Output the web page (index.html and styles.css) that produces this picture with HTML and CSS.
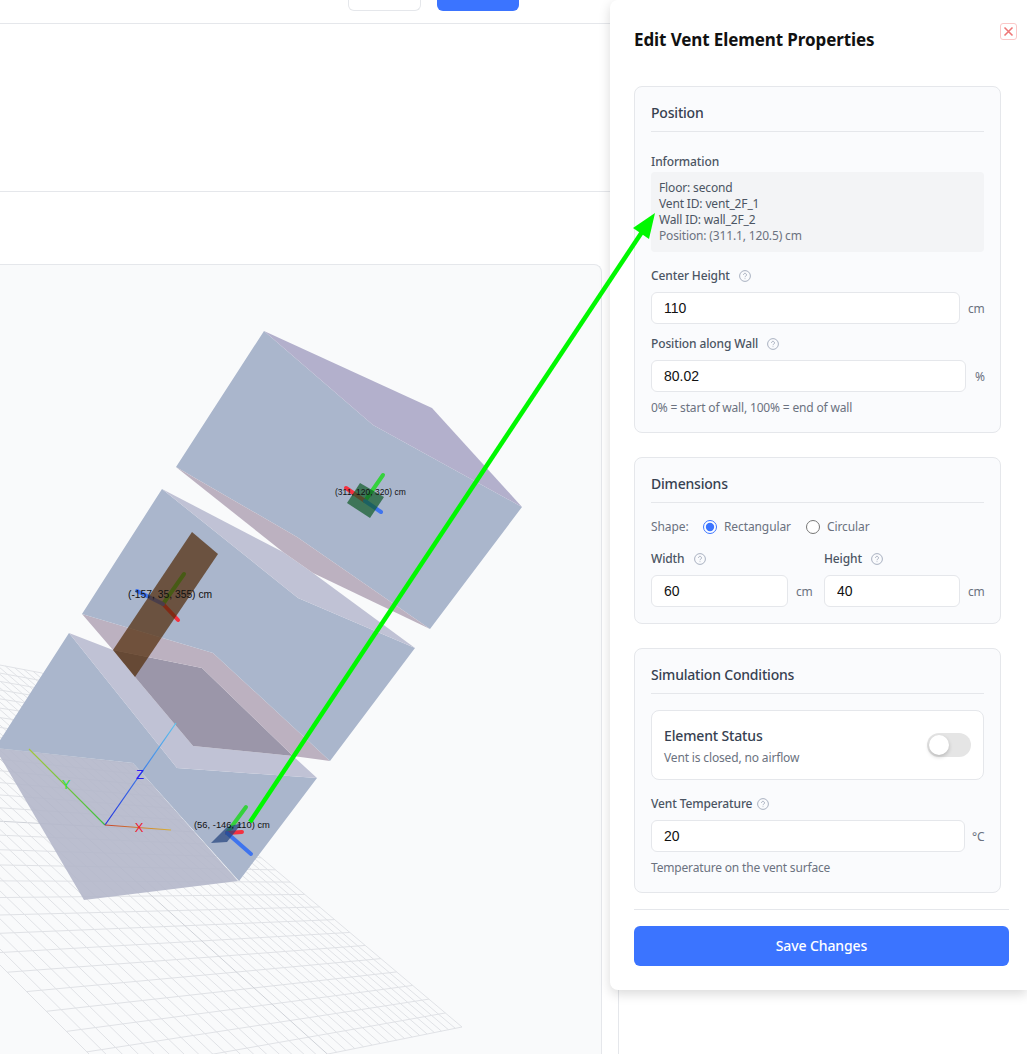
FILE: index.html
```html
<!DOCTYPE html>
<html lang="en">

<head>
    <meta charset="UTF-8">
    <title>Edit Vent Element Properties</title>
    <link rel="stylesheet" href="styles.css">
</head>

<body>
    <div class="topbar">
        <button class="top-btn top-btn-plain"></button>
        <button class="top-btn top-btn-blue"></button>
    </div>
    <div class="subbar"></div>

    <div class="workspace">
        <div class="canvas">
            <svg class="scene" viewBox="0 265 601 789">
                <defs>
                    <linearGradient id="axisZ" gradientUnits="userSpaceOnUse" x1="105" y1="825" x2="176" y2="723">
                        <stop offset="0" stop-color="#1f2fe0" />
                        <stop offset="1" stop-color="#5cc4ee" />
                    </linearGradient>
                    <linearGradient id="axisX" gradientUnits="userSpaceOnUse" x1="105" y1="825" x2="171" y2="830">
                        <stop offset="0" stop-color="#c8442c" />
                        <stop offset="1" stop-color="#d8b030" />
                    </linearGradient>
                    <linearGradient id="axisY" gradientUnits="userSpaceOnUse" x1="105" y1="825" x2="29" y2="749">
                        <stop offset="0" stop-color="#3fc03f" />
                        <stop offset="1" stop-color="#a4c83c" />
                    </linearGradient>
                </defs>

                <g id="grid" class="grid"></g>

                <!-- bottom room -->
                <polygon class="floor" points="-5,748 133,763 238,881 84,900" />
                <polygon class="wall" points="69,633 177,768 317,778 239,881 133,763 -5,748" />
                <polygon class="band" points="69,633 113,650 135,677 193,746 293,756 317,778 177,768" />
                <polygon class="shade" points="113,650 202,668 293,756 193,746 135,677" />
                <polygon class="strip" points="82,614 213,653 330,761 293,756 202,668 113,650" />

                <!-- middle room -->
                <polygon class="wall" points="162,489 298,598 415,648 330,761 213,653 82,614" />
                <polygon class="band" points="162,489 283,552 313,573 415,648 298,598" />

                <!-- top room -->
                <polygon class="wall" points="264,331 373,425 522,507 430,629 297,537 176,467" />
                <polygon class="roof" points="264,331 432,408 522,507 373,425" />
                <polygon class="strip" points="176,467 297,537 430,629 313,573 283,552" />

                <!-- world axes -->
                <line class="world" stroke="url(#axisY)" x1="105" y1="825" x2="29" y2="749" />
                <line class="world" stroke="url(#axisZ)" x1="105" y1="825" x2="176" y2="723" />
                <line class="world" stroke="url(#axisX)" x1="105" y1="825" x2="171" y2="830" />
                <text class="tag tag-y" x="66" y="789">Y</text>
                <text class="tag tag-z" x="140" y="779">Z</text>
                <text class="tag tag-x" x="139" y="832">X</text>

                <!-- vent_2F_1 -->
                <line class="arm arm-green" x1="365" y1="501" x2="383" y2="475" />
                <line class="arm arm-red" x1="365" y1="501" x2="346" y2="488" />
                <line class="arm arm-blue" x1="365" y1="501" x2="381" y2="512" />
                <polygon class="vent vent-green" points="360,483 384,497 370,518 347,503" />
                <text class="coord coord-small" x="335" y="495">(311, 120, 320) cm</text>

                <!-- tall vent -->
                <line class="arm arm-green" x1="163" y1="604" x2="184" y2="574" />
                <line class="arm arm-red" x1="163" y1="604" x2="178" y2="620" />
                <line class="arm arm-blue" x1="163" y1="604" x2="137" y2="591" />
                <polygon class="vent vent-brown" points="192,532 218,554 135,677 113,650" />
                <text class="coord" x="128" y="598">(-157, 35, 355) cm</text>

                <!-- low vent -->
                <line class="arm arm-green" x1="227" y1="833" x2="246" y2="807" />
                <line class="arm arm-red" x1="227" y1="833" x2="242" y2="832" />
                <line class="arm arm-blue" x1="227" y1="833" x2="251" y2="854" />
                <polygon class="vent vent-navy" points="211,843 227,827 242,823 227,842" />
                <text class="coord coord-low" x="194" y="828">(56, -146, 110) cm</text>
            </svg>
        </div>
        <div class="side"></div>
    </div>

    <div class="panel">
        <div class="panel-head">
            <h2>Edit Vent Element Properties</h2>
            <button class="close">
                <svg viewBox="0 0 11 11">
                    <path d="M1.5 1.5l8 8M9.5 1.5l-8 8" />
                </svg>
            </button>
        </div>

        <div class="section">
            <h3>Position</h3>
            <div class="label label-first">Information</div>
            <div class="info">
                <p>Floor: second</p>
                <p>Vent ID: vent_2F_1</p>
                <p>Wall ID: wall_2F_2</p>
                <p class="muted">Position: (311.1, 120.5) cm</p>
            </div>

            <div class="label">Center Height
                <svg class="help" viewBox="0 0 12 12"><circle cx="6" cy="6" r="5.4" /><path d="M4.5 4.8a1.5 1.5 0 1 1 2.3 1.3c-.5.3-.8.6-.8 1.1M6 8.4v.7" /></svg>
            </div>
            <div class="field">
                <input type="text" value="110">
                <span class="unit">cm</span>
            </div>

            <div class="label label-tight">Position along Wall
                <svg class="help" viewBox="0 0 12 12"><circle cx="6" cy="6" r="5.4" /><path d="M4.5 4.8a1.5 1.5 0 1 1 2.3 1.3c-.5.3-.8.6-.8 1.1M6 8.4v.7" /></svg>
            </div>
            <div class="field field-pct">
                <input type="text" value="80.02">
                <span class="unit">%</span>
            </div>
            <div class="hint">0% = start of wall, 100% = end of wall</div>
        </div>

        <div class="section">
            <h3>Dimensions</h3>
            <div class="shape">
                <span class="shape-name">Shape:</span>
                <label><input type="radio" name="shape" checked>Rectangular</label>
                <label><input type="radio" name="shape">Circular</label>
            </div>
            <div class="pair">
                <div>
                    <div class="label">Width
                        <svg class="help" viewBox="0 0 12 12"><circle cx="6" cy="6" r="5.4" /><path d="M4.5 4.8a1.5 1.5 0 1 1 2.3 1.3c-.5.3-.8.6-.8 1.1M6 8.4v.7" /></svg>
                    </div>
                    <div class="field">
                        <input type="text" value="60">
                        <span class="unit">cm</span>
                    </div>
                </div>
                <div>
                    <div class="label">Height
                        <svg class="help" viewBox="0 0 12 12"><circle cx="6" cy="6" r="5.4" /><path d="M4.5 4.8a1.5 1.5 0 1 1 2.3 1.3c-.5.3-.8.6-.8 1.1M6 8.4v.7" /></svg>
                    </div>
                    <div class="field">
                        <input type="text" value="40">
                        <span class="unit">cm</span>
                    </div>
                </div>
            </div>
        </div>

        <div class="section">
            <h3>Simulation Conditions</h3>
            <div class="status">
                <div>
                    <div class="status-name">Element Status</div>
                    <div class="status-text">Vent is closed, no airflow</div>
                </div>
                <div class="toggle"><span class="knob"></span></div>
            </div>
            <div class="label">Vent Temperature
                <svg class="help help-near" viewBox="0 0 12 12"><circle cx="6" cy="6" r="5.4" /><path d="M4.5 4.8a1.5 1.5 0 1 1 2.3 1.3c-.5.3-.8.6-.8 1.1M6 8.4v.7" /></svg>
            </div>
            <div class="field field-deg">
                <input type="text" value="20">
                <span class="unit">°C</span>
            </div>
            <div class="hint">Temperature on the vent surface</div>
        </div>

        <div class="panel-foot">
            <button class="save">Save Changes</button>
        </div>
    </div>

    <!-- pointer from the vent in the scene to its info box -->
    <svg class="pointer" viewBox="0 0 1027 1054">
        <line x1="250" y1="822" x2="642" y2="232" />
        <polygon points="655,213 633,228 649,239" />
    </svg>

    <script src="grid.js"></script>
</body>

</html>
```

FILE: styles.css
```css
* {
    margin: 0;
    padding: 0;
    box-sizing: border-box;
}

html,
body {
    height: 1054px;
    overflow: hidden;
}

body {
    position: relative;
    background-color: #fff;
    font-family: "Noto Sans", "Liberation Sans", sans-serif;
    color: #374151;
}

/* page behind the panel */
.topbar {
    display: flex;
    gap: 16px;
    height: 24px;
    padding-left: 348px;
    border-bottom: 1px solid #e5e7eb;
}

.top-btn {
    height: 11px;
    background-color: #fff;
    border: 1px solid #e5e7eb;
    border-top: 0;
    border-radius: 0 0 6px 6px;
}

.top-btn-plain {
    width: 73px;
}

.top-btn-blue {
    width: 82px;
    background-color: #3b74ff;
    border: 0;
}

.subbar {
    height: 168px;
    border-bottom: 1px solid #e5e7eb;
}

.workspace {
    display: flex;
    margin-top: 72px;
    height: 790px;
}

.canvas {
    width: 602px;
    background-color: #f9fafb;
    border-top: 1px solid #e5e7eb;
    border-right: 1px solid #e5e7eb;
    border-top-right-radius: 8px;
    overflow: hidden;
}

.side {
    flex: 1;
    margin-left: 16px;
    border-left: 1px solid #e5e7eb;
}

/* 3d scene */
.scene {
    display: block;
    width: 601px;
    height: 789px;
}

.grid line {
    stroke: #e0e2e6;
    stroke-width: 1;
}

.grid line.major {
    stroke: #cfd2d8;
}

.floor {
    fill: #b4b7ca;
    opacity: 0.9;
}

.wall {
    fill: #aab6cc;
}

.band {
    fill: #c0c2d5;
}

.roof {
    fill: #b3b0cc;
}

.shade {
    fill: #9b96a9;
}

.strip {
    fill: #bcb1c0;
}

.world {
    stroke-width: 1.2;
}

.tag {
    font-family: "Liberation Sans", sans-serif;
    font-size: 13px;
    text-anchor: middle;
}

.tag-x {
    fill: #f02030;
}

.tag-y {
    fill: #30e030;
}

.tag-z {
    fill: #2a1ef0;
}

.arm {
    stroke-width: 4;
    stroke-linecap: round;
}

.arm-green {
    stroke: #35d23c;
}

.arm-red {
    stroke: #f5303f;
}

.arm-blue {
    stroke: #3f74ee;
}

.vent {
    opacity: 0.7;
}

.vent-green {
    fill: #0e5a26;
}

.vent-brown {
    fill: #502804;
}

.vent-navy {
    fill: #21427c;
}

.coord {
    font-family: "Liberation Sans", sans-serif;
    font-size: 10.3px;
    fill: #111;
}

.coord-low {
    font-size: 9.4px;
}

.coord-small {
    font-size: 8.5px;
}

/* edit panel */
.panel {
    position: absolute;
    top: 0;
    left: 610px;
    width: 417px;
    height: 990px;
    padding: 25px 18px 24px 24px;
    background-color: #fff;
    border-radius: 8px 0 0 8px;
    box-shadow: 0 4px 12px rgba(0, 0, 0, 0.15);
}

.panel-head {
    position: relative;
    height: 28px;
    margin-bottom: 33px;
}

.panel-head h2 {
    padding-top: 1px;
    font-size: 17px;
    line-height: 28px;
    font-weight: 700;
    letter-spacing: -0.1px;
    color: #111;
}

.close {
    position: absolute;
    top: -2px;
    right: -8px;
    width: 17px;
    height: 17px;
    background-color: #fff;
    border: 1px solid #fbc8c8;
    border-radius: 3px;
}

.close svg {
    display: block;
    width: 11px;
    height: 11px;
    margin: 2px;
    fill: none;
    stroke: #ee7676;
    stroke-width: 1.6;
}

.section {
    width: 367px;
    margin-bottom: 24px;
    padding: 16px 16px 16px;
    background-color: #fafbfd;
    border: 1px solid #e5e7eb;
    border-radius: 8px;
}

.section h3 {
    height: 29px;
    padding-bottom: 8px;
    margin-bottom: 15px;
    font-size: 14px;
    line-height: 20px;
    font-weight: 500;
    letter-spacing: -0.2px;
    color: #374151;
    border-bottom: 1px solid #e5e7eb;
}

.label {
    display: flex;
    align-items: center;
    margin-top: 15px;
    padding-top: 1px;
    font-size: 12px;
    line-height: 16px;
    font-weight: 500;
    letter-spacing: -0.12px;
    color: #4b5563;
}

.label-first {
    margin-top: 21px;
}

.label-tight {
    margin-top: 11px;
}

.help {
    width: 12px;
    height: 12px;
    margin-left: 9px;
    fill: none;
    stroke: #a9b1c0;
    stroke-width: 1;
}

.help-near {
    margin-left: 5px;
}

.info {
    height: 80px;
    margin-top: 2px;
    padding: 8px;
    background-color: #f3f4f6;
    border-radius: 4px;
    font-size: 12px;
    line-height: 16px;
    letter-spacing: -0.15px;
    color: #4b5563;
}

.info .muted {
    color: #6b7280;
}

.field {
    display: flex;
    align-items: center;
    gap: 8px;
    margin-top: 8px;
}

.field input {
    flex: 1;
    min-width: 0;
    height: 32px;
    padding: 0 12px;
    background-color: #fff;
    border: 1px solid #e5e7eb;
    border-radius: 6px;
    font-family: "Liberation Sans", sans-serif;
    font-size: 14px;
    color: #111;
}

.unit {
    width: 16px;
    font-size: 12px;
    letter-spacing: -0.2px;
    color: #6b7280;
}

.field-pct {
    gap: 9px;
}

.field-pct .unit {
    width: 9px;
}

.field-deg {
    gap: 7px;
}

.field-deg .unit {
    width: 12px;
}

.hint {
    margin-top: 8px;
    font-size: 12px;
    line-height: 16px;
    letter-spacing: -0.17px;
    color: #6b7280;
}

.shape {
    display: flex;
    align-items: center;
    height: 16px;
    margin-top: 16px;
    font-size: 12px;
    letter-spacing: -0.1px;
    color: #6b7280;
}

.shape-name {
    width: 52px;
    margin-top: -1px;
}

.shape label {
    display: flex;
    align-items: center;
    margin-top: -1px;
    margin-right: 15px;
    color: #6b7280;
}

.shape input {
    width: 14px;
    height: 14px;
    margin-top: 1px;
    margin-right: 7px;
    accent-color: #3b74ff;
}

.pair {
    display: grid;
    grid-template-columns: 161px 160px;
    gap: 12px;
}

.status {
    display: flex;
    justify-content: space-between;
    align-items: center;
    height: 70px;
    margin-top: 16px;
    padding: 0 12px;
    background-color: #fff;
    border: 1px solid #e5e7eb;
    border-radius: 8px;
}

.status-name {
    padding-top: 1px;
    font-size: 14px;
    line-height: 20px;
    font-weight: 500;
    letter-spacing: -0.15px;
    color: #374151;
}

.status-text {
    margin-top: 4px;
    font-size: 12px;
    line-height: 16px;
    letter-spacing: -0.15px;
    color: #6b7280;
}

.toggle {
    width: 44px;
    height: 24px;
    padding: 2px;
    background-color: #e5e5e5;
    border-radius: 12px;
}

.knob {
    display: block;
    width: 20px;
    height: 20px;
    background-color: #fff;
    border-radius: 50%;
    box-shadow: 0 2px 4px rgba(0, 0, 0, 0.2);
}

.panel-foot {
    margin-top: -8px;
    padding-top: 16px;
    border-top: 1px solid #e5e7eb;
}

.save {
    display: block;
    width: 100%;
    height: 40px;
    padding-bottom: 2px;
    background-color: #3b74ff;
    border: 0;
    border-radius: 6px;
    font-family: inherit;
    font-size: 14px;
    font-weight: 500;
    letter-spacing: -0.1px;
    color: #fff;
}

/* green pointer, lies over everything */
.pointer {
    position: absolute;
    top: 0;
    left: 0;
    width: 1027px;
    height: 1054px;
    pointer-events: none;
}

.pointer line {
    stroke: #00f800;
    stroke-width: 4.5;
}

.pointer polygon {
    fill: #00f800;
}
```

FILE: grid.js
```js
// ground grid of the scene: a flat plane seen in perspective,
// the lines come from mapping the unit square on the four corners
var oGrid = document.getElementById('grid')
var cols = 30
var rows = 34

var A = [42, 673], B = [462, 1027], C = [129, 1094], D = [-370, 595]

var dx1 = B[0] - C[0], dx2 = D[0] - C[0], sx = A[0] - B[0] + C[0] - D[0]
var dy1 = B[1] - C[1], dy2 = D[1] - C[1], sy = A[1] - B[1] + C[1] - D[1]
var det = dx1 * dy2 - dx2 * dy1
var g = (sx * dy2 - dx2 * sy) / det
var h = (dx1 * sy - sx * dy1) / det

function project(u, v) {
    var w = 1 + g * u + h * v
    return [
        (A[0] + (B[0] - A[0] + g * B[0]) * u + (D[0] - A[0] + h * D[0]) * v) / w,
        (A[1] + (B[1] - A[1] + g * B[1]) * u + (D[1] - A[1] + h * D[1]) * v) / w
    ]
}

function addLine(p, q, major) {
    var oLine = document.createElementNS('http://www.w3.org/2000/svg', 'line')
    oLine.setAttribute('x1', p[0])
    oLine.setAttribute('y1', p[1])
    oLine.setAttribute('x2', q[0])
    oLine.setAttribute('y2', q[1])
    if (major) oLine.setAttribute('class', 'major')
    oGrid.appendChild(oLine)
}

for (var i = 0; i <= cols; i++) {
    addLine(project(i / cols, 0), project(i / cols, 1), i == 15)
}
for (var j = 0; j <= rows; j++) {
    addLine(project(0, j / rows), project(1, j / rows), j == 17)
}
```
